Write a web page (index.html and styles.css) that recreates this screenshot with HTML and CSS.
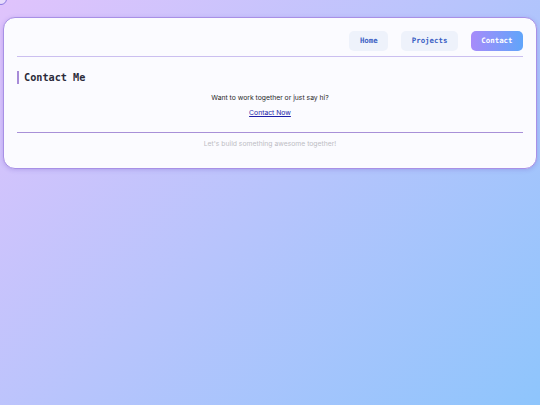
FILE: index.html
```html
<!DOCTYPE html>
<html lang="en">
<head>
<meta charset="utf-8">
<title>Contact</title>
<link rel="stylesheet" href="styles.css">
</head>
<body>
<div class="dot"></div>
<div class="card">
  <header class="topbar">
    <nav class="nav">
      <a class="btn" href="#">Home</a>
      <a class="btn" href="#">Projects</a>
      <a class="btn btn-active" href="#">Contact</a>
    </nav>
  </header>
  <section class="contact">
    <h2 class="title">Contact Me</h2>
    <p class="lead">Want to work together or just say hi?</p>
    <p class="cta"><a href="#">Contact Now</a></p>
  </section>
  <footer class="foot">Let's build something awesome together!</footer>
</div>
</body>
</html>
```
FILE: styles.css
```css
html, body {
  margin: 0;
  padding: 0;
  height: 100%;
}
body {
  background: linear-gradient(135deg, #e0c3fc 0%, #8ec5fc 100%);
  font-family: Inter, "Liberation Sans", sans-serif;
  overflow: hidden;
}
.dot {
  position: absolute;
  top: -7px;
  left: -5px;
  width: 10px;
  height: 10px;
  border-radius: 50%;
  border: 1px solid #8a78e0;
  background: #e8dcfc;
}
.card {
  margin: 17px 3px 0;
  background: #fbfbff;
  border: 1.5px solid #a890e6;
  border-radius: 12px;
  padding: 13px 13px 19px;
  box-shadow: 0 1px 4px rgba(120, 90, 200, 0.3);
}
.topbar {
  border-bottom: 1.5px solid #cbbff0;
  padding-bottom: 5px;
}
.nav {
  display: flex;
  justify-content: flex-end;
  gap: 13px;
}
.btn {
  display: block;
  font-family: "DejaVu Sans Mono", "Liberation Mono", monospace;
  font-weight: bold;
  font-size: 7.4px;
  line-height: 20px;
  height: 20px;
  padding: 0 10.5px;
  border-radius: 5px;
  background: #eef2fb;
  color: #3b5fc4;
  text-decoration: none;
}
.btn-active {
  background: linear-gradient(90deg, #a78bfa, #60a5fa);
  color: #fff;
}
.contact {
  text-align: center;
  padding: 14px 0 14px;
  border-bottom: 1px solid #a890d8;
}
.title {
  margin: 0 0 9px;
  text-align: left;
  font-family: "DejaVu Sans Mono", "Liberation Mono", monospace;
  font-weight: bold;
  font-size: 10.2px;
  line-height: 13px;
  color: #2b2b3a;
  border-left: 2.5px solid #a78bd8;
  padding-left: 5px;
}
.lead {
  margin: 0;
  font-size: 6.8px;
  line-height: 10px;
  color: #2a2a2a;
}
.cta {
  margin: 5px 0 0;
  font-size: 6.8px;
  line-height: 10px;
}
.cta a {
  color: #1d1da8;
  text-decoration: underline;
}
.foot {
  text-align: center;
  font-size: 6.8px;
  line-height: 10px;
  color: #bdbdc4;
  padding-top: 6px;
}
```
